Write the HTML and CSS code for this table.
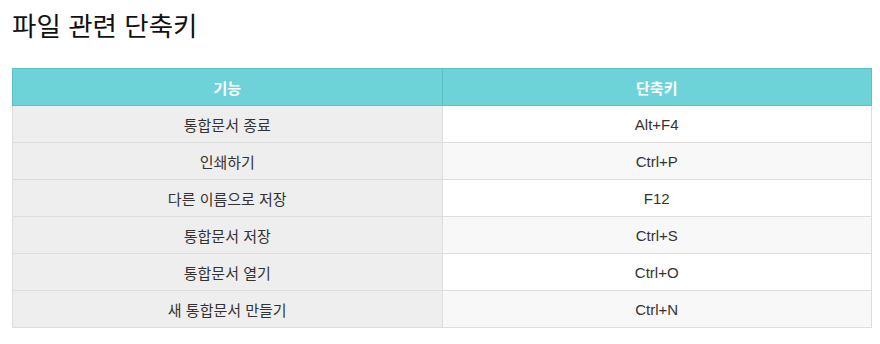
FILE: index.html
```html
<!DOCTYPE html>
<html lang="ko">
<head>
<meta charset="utf-8">
<link rel="stylesheet" href="styles.css">
</head>
<body>
<h1 class="title">파일 관련 단축키</h1>
<table class="keys">
  <thead>
    <tr><th>기능</th><th>단축키</th></tr>
  </thead>
  <tbody>
    <tr><td class="fn">통합문서 종료</td><td>Alt+F4</td></tr>
    <tr><td class="fn">인쇄하기</td><td>Ctrl+P</td></tr>
    <tr><td class="fn">다른 이름으로 저장</td><td>F12</td></tr>
    <tr><td class="fn">통합문서 저장</td><td>Ctrl+S</td></tr>
    <tr><td class="fn">통합문서 열기</td><td>Ctrl+O</td></tr>
    <tr><td class="fn">새 통합문서 만들기</td><td>Ctrl+N</td></tr>
  </tbody>
</table>
</body>
</html>
```
FILE: styles.css
```css
body {
  margin: 0;
  padding: 0 8px 0 12px;
  font-family: "Noto Sans CJK KR", "Liberation Sans", sans-serif;
  color: #333;
  background: #fff;
}
.title {
  margin: 0;
  padding-top: 6px;
  height: 62px;
  font-size: 26.5px;
  font-weight: normal;
  line-height: 38px;
  color: #111;
}
.keys {
  width: 860px;
  border-collapse: collapse;
  table-layout: fixed;
  font-size: 15px;
}
.keys th, .keys td {
  height: 36px;
  padding: 0;
  text-align: center;
  border: 1px solid #ddd;
}
.keys th {
  background: #6dd3d8;
  border-color: #5cc0c5;
  color: #fff;
  font-weight: bold;
}
.keys td {
  font-family: "Liberation Sans", "Noto Sans CJK KR", sans-serif;
  background: #fff;
}
.keys tbody tr:nth-child(even) td {
  background: #f8f8f8;
}
.keys td.fn {
  font-family: "Noto Sans CJK KR", sans-serif;
  background: #eee;
}
.keys tbody tr:nth-child(even) td.fn {
  background: #eee;
}
```
